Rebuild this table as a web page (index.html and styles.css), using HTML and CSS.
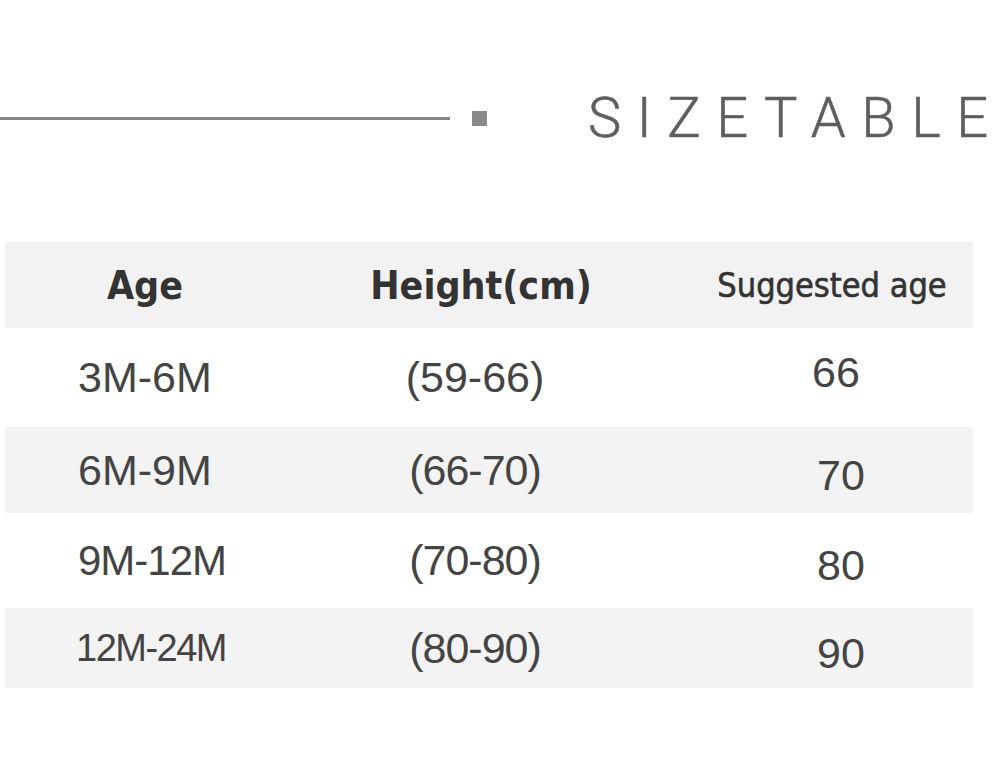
FILE: index.html
```html
<!DOCTYPE html>
<html lang="en">
<head>
<meta charset="utf-8">
<title>Size table</title>
<link rel="stylesheet" href="styles.css">
</head>
<body>
<div class="page">
  <div class="title-row">
    <div class="rule"></div>
    <div class="dot"></div>
    <h1 class="title">SIZETABL<span class="last">E</span></h1>
  </div>
  <div class="table">
    <div class="row head">
      <div class="cell c1">Age</div>
      <div class="cell c2">Height(cm)</div>
      <div class="cell c3 small">Suggested age</div>
    </div>
    <div class="row r1">
      <div class="cell c1 left">3M-6M</div>
      <div class="cell c2">(59-66)</div>
      <div class="cell c3 up">66</div>
    </div>
    <div class="row r2 shade">
      <div class="cell c1 left">6M-9M</div>
      <div class="cell c2 tight">(66-70)</div>
      <div class="cell c3 down">70</div>
    </div>
    <div class="row r3">
      <div class="cell c1 left mid">9M-12M</div>
      <div class="cell c2 tight">(70-80)</div>
      <div class="cell c3 down">80</div>
    </div>
    <div class="row r4 shade">
      <div class="cell c1 left narrow">12M-24M</div>
      <div class="cell c2 tight">(80-90)</div>
      <div class="cell c3 down">90</div>
    </div>
  </div>
</div>
</body>
</html>
```
FILE: styles.css
```css
html, body {
  margin: 0;
  padding: 0;
  background: #ffffff;
}

.page {
  width: 1000px;
  height: 768px;
  padding-top: 88px;
  box-sizing: border-box;
  overflow: hidden;
}

.title-row {
  display: flex;
  align-items: center;
  height: 60px;
}

.rule {
  flex: 0 0 450px;
  height: 3px;
  background: #868686;
}

.dot {
  flex: 0 0 15px;
  height: 15px;
  background: #8a8a8a;
  margin-left: 22px;
}

.title {
  flex: 0 0 auto;
  margin: 0 0 0 101px;
  font-family: Roboto, "Liberation Sans", sans-serif;
  font-weight: 300;
  font-size: 56px;
  line-height: 60px;
  letter-spacing: 15.5px;
  color: #5e5e5e;
  white-space: nowrap;
  -webkit-text-stroke: 0.5px #5e5e5e;
}

.title .last {
  letter-spacing: 0;
}

.table {
  margin-top: 94px;
  margin-left: 5px;
  width: 968px;
}

.row {
  display: grid;
  grid-template-columns: 280px 380px 1fr;
  align-items: center;
  font-family: "Liberation Sans", Arial, sans-serif;
  font-size: 43px;
  color: #444444;
}

.head {
  height: 86px;
  background: #f2f2f2;
  font-family: "DejaVu Sans Condensed", "DejaVu Sans", sans-serif;
  font-weight: 700;
  font-size: 39px;
  color: #333333;
}

.r1 { height: 99px; }
.r2 { height: 86px; }
.r3 { height: 95px; }
.r4 { height: 80px; }

.shade {
  background: #f3f3f3;
}

.cell {
  text-align: center;
  white-space: nowrap;
}

.c3 {
  padding-left: 34px;
}

.head .c2 {
  padding-left: 12px;
}

.head .small {
  font-weight: 400;
  font-size: 34px;
  padding-left: 26px;
  -webkit-text-stroke: 0.6px #333333;
}

.left {
  text-align: left;
  padding-left: 73px;
}

.mid {
  font-size: 42px;
  letter-spacing: -1px;
}

.narrow {
  padding-left: 71px;
  font-size: 38px;
  letter-spacing: -1.5px;
}

.tight {
  letter-spacing: -1px;
}

.up {
  padding-bottom: 10px;
}

.down {
  padding-top: 10px;
  padding-left: 44px;
}
```
